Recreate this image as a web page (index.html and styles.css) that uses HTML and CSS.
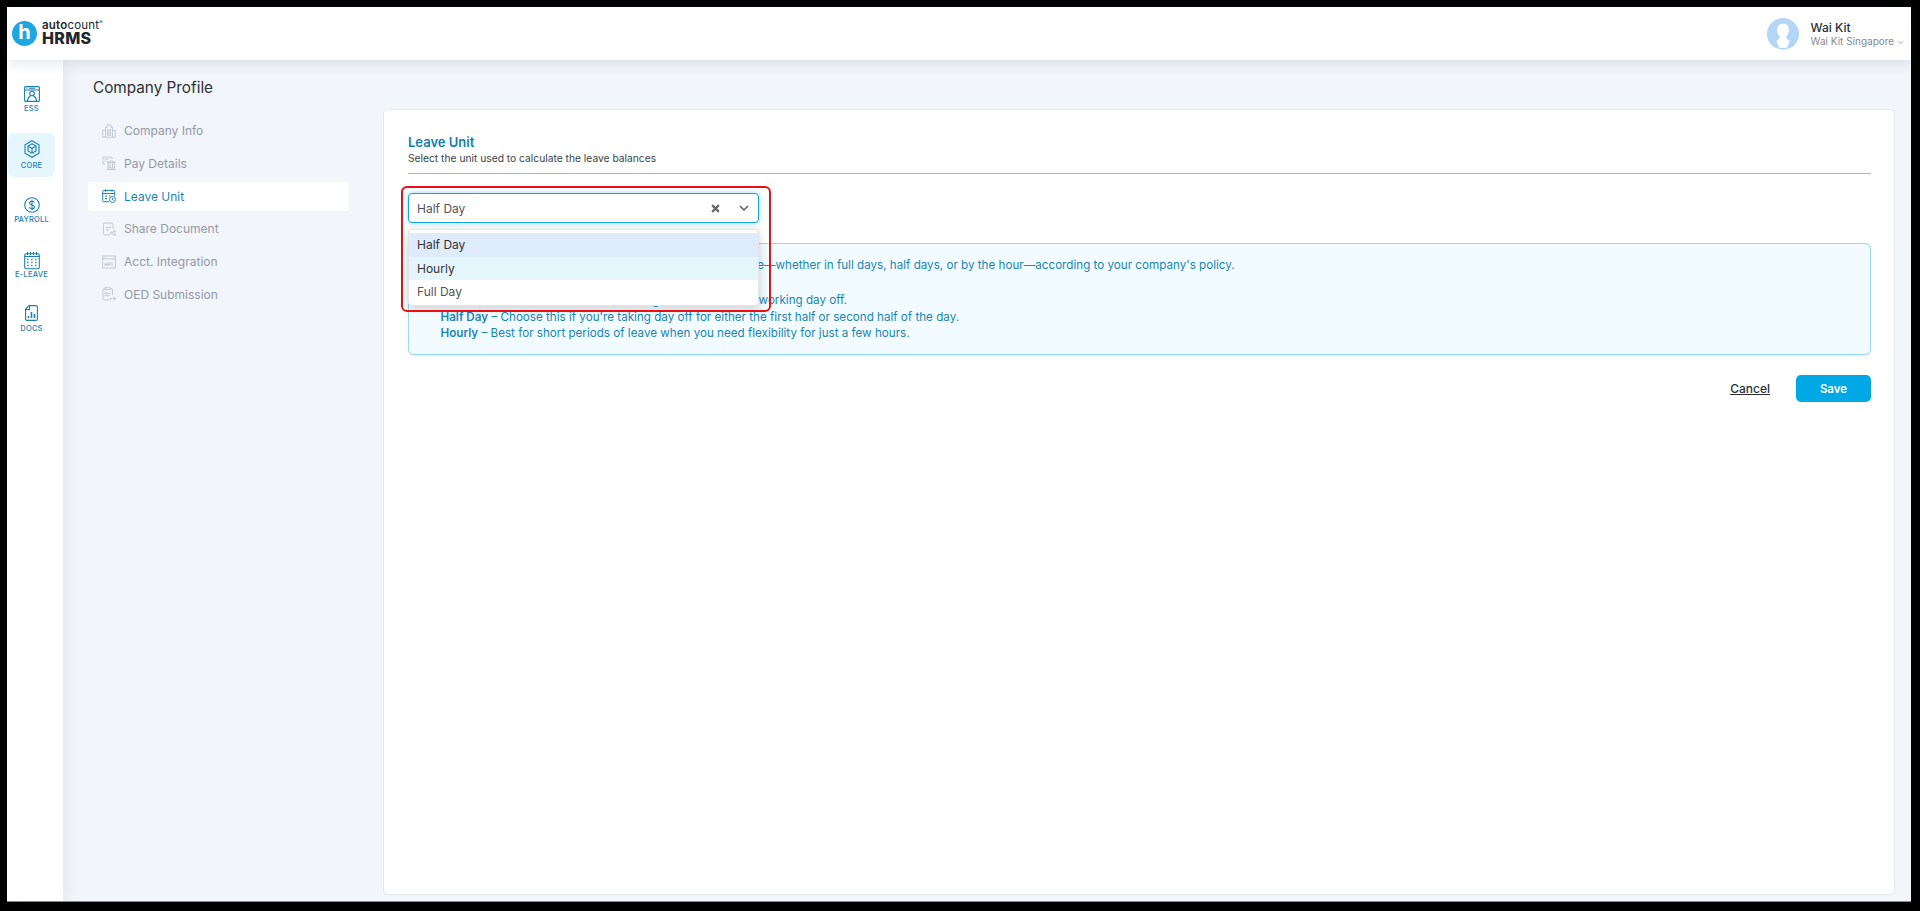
FILE: index.html
```html
<!DOCTYPE html>
<html lang="en">
<head>
  <meta charset="UTF-8" />
  <meta name="viewport" content="width=device-width, initial-scale=1" />
  <title>Company Profile</title>
  <link rel="stylesheet" href="styles.css">
</head>
<body>

<div class="app">

  <!-- top bar -->
  <header class="topbar">
    <div class="logo">
      <span class="logo-mark">h</span>
      <div class="logo-text">
        <div class="logo-top"><b>auto</b>count<sup>®</sup></div>
        <div class="logo-name">HRMS</div>
      </div>
    </div>
    <div class="user">
      <svg class="avatar" viewBox="0 0 32 32">
        <defs><clipPath id="avatarClip"><path d="M0 0h32v27.5L26 29.500 16 32 6 29.500 0 27.500z"/></clipPath></defs>
        <circle cx="16" cy="16" r="16" fill="#b3d5f6" clip-path="url(#avatarClip)"/>
        <path d="M16 5.500c-3.800 0-6 2.800-6 6.300 0 3 1.400 5.500 2.700 7 .5 1.800-1.500 3-3.400 4.300L12 29.500c2.600.7 5.400.7 8 0l2.700-6.400c-1.900-1.300-3.900-2.500-3.400-4.300 1.300-1.500 2.700-4 2.700-7 0-3.500-2.200-6.300-6-6.300z" fill="#fff"/>
      </svg>
      <div class="user-text">
        <div class="user-name">Wai Kit</div>
        <div class="user-org">Wai Kit Singapore
          <svg class="user-caret" viewBox="0 0 8 5"><path d="M1 1l3 3 3-3" fill="none" stroke="#888" stroke-width="0.800"/></svg>
        </div>
      </div>
    </div>
  </header>

  <div class="body">

    <!-- module rail -->
    <aside class="rail">
      <div class="rail-item rail-ess">
        <svg class="rail-icon" viewBox="0 0 16 16"><rect x="0.600" y="0.600" width="14.800" height="14.800" rx="1"/><path d="M0.600 4h14.800M2.500 2.300h1M5 2.300h6"/><circle cx="8" cy="7.500" r="2.300"/><path d="M3.500 15c0-3 2-4.400 2.900-4.800M12.500 15c0-3-2-4.400-2.900-4.800"/></svg>
        <span>ESS</span>
      </div>
      <div class="rail-item rail-core active">
        <svg class="rail-icon" viewBox="0 0 16 18"><path d="M8 .7l7 4v8.600l-7 4-7-4V4.700z"/><path d="M8 3.800l4 2.300v4.800l-4 2.300-4-2.300V6.100z"/><path d="M4 6.100l4 2.400 4-2.400M8 8.500v4.700"/></svg>
        <span>CORE</span>
      </div>
      <div class="rail-item rail-payroll">
        <svg class="rail-icon" viewBox="0 0 16 16"><circle cx="8" cy="8" r="7.300"/><path d="M10.500 5.700C10.200 4.700 9.200 4.200 8 4.200c-1.500 0-2.500.8-2.500 1.900 0 2.700 5 1.200 5 3.800 0 1.100-1 1.900-2.500 1.900-1.300 0-2.300-.6-2.600-1.600M8 2.800v10.400"/></svg>
        <span>PAYROLL</span>
      </div>
      <div class="rail-item rail-leave">
        <svg class="rail-icon" viewBox="0 0 16 18"><rect x="0.700" y="2.200" width="14.600" height="15" rx="1.500"/><path d="M3.500 0.500v3M6.500 0.500v3M9.500 0.500v3M12.500 0.500v3M0.700 5h14.600"/><path class="dots" d="M3.200 8h1.600M7.200 8h1.600M11.200 8h1.600M3.200 11h1.600M7.200 11h1.600M11.200 11h1.600M3.200 14h1.600M7.200 14h1.600M11.200 14h1.600"/></svg>
        <span>E-LEAVE</span>
      </div>
      <div class="rail-item rail-docs">
        <svg class="rail-icon doc-icon" viewBox="0 0 13 16"><path d="M4 .6h7a1.400 1.400 0 0 1 1.400 1.400v12a1.400 1.400 0 0 1-1.400 1.400H2A1.400 1.400 0 0 1 .6 14V4z"/><path d="M.6 4.500H4.500V.6"/><path class="bars" d="M3.500 13v-2M6.500 13V7M9.500 13v-4"/></svg>
        <span>DOCS</span>
      </div>
    </aside>

    <main class="main">

      <!-- sections -->
      <section class="side">
        <h1 class="page-title">Company Profile</h1>
        <nav class="side-nav">
          <a class="side-link">
            <svg viewBox="0 0 14 14"><path d="M3.500 13V3.500h1.500V1h4v2.500h1.500V13M.7 13V6.500h2.800M13.300 13V6.500h-2.800M.3 13.200h13.400M5.500 5v7M7 5v7M8.500 5v7"/></svg>
            Company Info
          </a>
          <a class="side-link">
            <svg viewBox="0 0 14 14"><path d="M3 8H1V1h9v2M2.500 3h4M2.500 5h2M5 6.500L9.300 4.500l4.200 2H5zM6 6.800v5M8 6.800v5M10.500 6.800v5M12.500 6.800v5M5 12h8.500M4.500 13.500h9.500"/></svg>
            Pay Details
          </a>
          <a class="side-link active">
            <svg viewBox="0 0 14 14"><path d="M7 12.700H1.700a1 1 0 0 1-1-1V2.500a1 1 0 0 1 1-1h10a1 1 0 0 1 1 1V7M3.500.3v2.500M10 .3v2.500M.7 4.500h12M3 7h2M3 9.500h2M7 7h1.500"/><circle cx="10.500" cy="10.500" r="3"/><path d="M10.500 9v1.700l1.100.7"/></svg>
            Leave Unit
          </a>
          <a class="side-link">
            <svg viewBox="0 0 14 14"><path d="M8 13H3a1.500 1.500 0 0 1-1.500-1.500V2.500A1.500 1.500 0 0 1 3 1h6a2 2 0 0 1 2 2v4M4 5.500h5M4 8h3"/><circle cx="9" cy="11" r=".9"/><circle cx="12.500" cy="9.300" r=".9"/><circle cx="12.500" cy="12.700" r=".9"/><path d="M9.800 10.600l1.900-1M9.800 11.400l1.900 1"/></svg>
            Share Document
          </a>
          <a class="side-link">
            <svg viewBox="0 0 14 14"><rect x=".7" y="1" width="12.600" height="12"/><path d="M.7 3.800h12.600M2.500 2.400h1"/><path class="thin" d="M3 11V8.500l1-1 1 1V11M3 9.700h2M6.300 11V7.500h1.300a1 1 0 0 1 0 2.200H6.300M10 7.500V11"/></svg>
            Acct. Integration
          </a>
          <a class="side-link">
            <svg viewBox="0 0 14 14"><path d="M9 13H2.500a1.500 1.500 0 0 1-1.500-1.500V3a1.500 1.500 0 0 1 1.500-1.500H3M8.500 1.500h.500A1.500 1.500 0 0 1 10.500 3v5M3 .7h5.500v2H3zM5.500 6.500h3M5.500 8.500h2"/><circle cx="3.700" cy="6.300" r="1"/><path d="M2.300 9.500c0-1 .7-1.500 1.400-1.500s1.400.5 1.400 1.500M8 11.500h5.500M11.500 9.500l2 2-2 2"/></svg>
            OED Submission
          </a>
        </nav>
      </section>

      <!-- leave unit form -->
      <section class="card">
        <h2 class="card-title">Leave Unit</h2>
        <p class="card-sub">Select the unit used to calculate the leave balances</p>
        <div class="divider"></div>

        <div class="select-wrap">
          <div class="select">
            <span class="select-value">Half Day</span>
            <svg class="select-clear" viewBox="0 0 8 8"><path d="M1 1l6 6M7 1L1 7"/></svg>
            <svg class="select-caret" viewBox="0 0 10 6"><path d="M1 1l4 4 4-4"/></svg>
          </div>
          <div class="select-menu">
            <div class="option selected">Half Day</div>
            <div class="option hover">Hourly</div>
            <div class="option">Full Day</div>
          </div>
          <div class="callout"></div>
        </div>

        <div class="info">
          <p class="info-lead">Leave Unit lets you decide how staff apply for their leave time—whether in full days, half days, or by the hour—according to your company's policy.</p>
          <p class="info-head">Leave unit options:</p>
          <p class="info-row"><b>Full Day</b> – Select this if you are planning to take the entire working day off.</p>
          <p class="info-row"><b>Half Day</b> – Choose this if you're taking day off for either the first half or second half of the day.</p>
          <p class="info-row"><b>Hourly</b> – Best for short periods of leave when you need flexibility for just a few hours.</p>
        </div>

        <div class="actions">
          <a class="btn-cancel">Cancel</a>
          <button class="btn-save" type="button">Save</button>
        </div>
      </section>

    </main>
  </div>
</div>

</body>
</html>
```

FILE: styles.css
```css
* {
  box-sizing: border-box;
}
html, body {
  height: 100%;
}
body {
  margin: 0;
  padding: 7px 9px 9px 7px;
  background: #000;
  font-family: "Inter", "Liberation Sans", sans-serif;
  overflow: hidden;
}
.app {
  height: 100%;
  display: flex;
  flex-direction: column;
  background: #f2f5f9;
  border-bottom: 1px solid #8a8a8a;
}

/* top bar */
.topbar {
  height: 53px;
  flex: none;
  background: white;
  display: flex;
  align-items: center;
  justify-content: space-between;
  padding: 0 7px 0 5px;
  box-shadow: 0 3px 12px rgba(60, 80, 110, 0.14);
  position: relative;
  z-index: 2;
}
.logo {
  display: flex;
  align-items: center;
  gap: 5px;
}
.logo-mark {
  width: 25px;
  height: 25px;
  border-radius: 50%;
  background: #1ea6e3;
  color: white;
  font-size: 20px;
  font-weight: 700;
  line-height: 23px;
  text-align: center;
}
.logo-text {
  color: #23262b;
  margin-top: -2px;
}
.logo-top {
  font-size: 11.500px;
  line-height: 11px;
  letter-spacing: 0.2px;
}
.logo-top b {
  font-weight: 600;
}
.logo-top sup {
  font-size: 5px;
  line-height: 0;
}
.logo-name {
  font-size: 16px;
  line-height: 15px;
  font-weight: 800;
  letter-spacing: 0.3px;
}
.user {
  display: flex;
  align-items: center;
  gap: 12px;
}
.avatar {
  width: 32px;
  height: 32px;
}
.user-name {
  font-size: 12px;
  font-weight: 500;
  line-height: 15px;
  color: #2b2f36;
}
.user-org {
  font-size: 10px;
  line-height: 13px;
  color: #85898f;
}
.user-caret {
  width: 7px;
  height: 5px;
}

/* module rail */
.body {
  flex: 1;
  display: flex;
  min-height: 0;
}
.rail {
  width: 56px;
  flex: none;
  background: white;
  padding: 26px 8px 0 1px;
  display: flex;
  flex-direction: column;
  box-shadow: 4px 0 14px rgba(60, 80, 110, 0.08);
  position: relative;
  z-index: 1;
}
.rail-item {
  flex: none;
  border-radius: 6px;
  display: flex;
  flex-direction: column;
  align-items: center;
  color: #1a80b4;
  font-size: 7.500px;
  font-weight: 500;
  letter-spacing: 0.2px;
  line-height: 10px;
}
.rail-item.active {
  background: #e6f6fd;
}
.rail-icon {
  width: 16px;
  height: 16px;
  flex: none;
  fill: none;
  stroke: #1a80b4;
  stroke-width: 1.100;
  margin-bottom: 2px;
}
.rail-ess {
  height: 47px;
}
.rail-core {
  height: 44px;
  margin-bottom: 20px;
  padding-top: 7px;
}
.rail-core .rail-icon {
  height: 18px;
  margin-bottom: 3px;
}
.rail-payroll {
  height: 54px;
}
.rail-leave {
  height: 54px;
}
.rail-leave .rail-icon {
  height: 19px;
  margin-bottom: 0;
}
.rail-leave .dots {
  stroke-dasharray: 1.300 2.700;
  stroke-width: 1.300;
}
.rail-docs .doc-icon {
  width: 13px;
  margin-bottom: 3px;
}
.doc-icon .bars {
  stroke-width: 1.600;
}

/* main area */
.main {
  flex: 1;
  min-width: 0;
  display: flex;
  gap: 34px;
  padding: 49px 16px 6px 25px;
}
.side {
  width: 261px;
  flex: none;
  margin-top: -31px;
}
.page-title {
  margin: 0 0 18px 5px;
  font-size: 15.300px;
  line-height: 20px;
  font-weight: 400;
  color: #2c3038;
}
.side-nav {
  display: flex;
  flex-direction: column;
  gap: 3.800px;
}
.side-link {
  height: 29px;
  display: flex;
  align-items: center;
  gap: 8px;
  padding-left: 14px;
  border-radius: 3px;
  font-size: 12px;
  color: #939aa6;
}
.side-link svg {
  width: 14px;
  height: 14px;
  fill: none;
  stroke: #b9c1cc;
  stroke-width: 0.800;
}
.side-link.active {
  background: white;
  color: #1a86b8;
}
.side-link.active svg {
  stroke: #1a86b8;
  stroke-width: 1;
}

/* card */
.card {
  flex: 1;
  min-width: 0;
  background: white;
  border: 1px solid #e4e8ee;
  border-radius: 5px;
  padding: 23px 23px 0 24px;
}
.card-title {
  margin: 0;
  font-size: 13px;
  line-height: 18px;
  font-weight: 600;
  color: #0f7fad;
}
.card-sub {
  margin: 0;
  font-size: 10.250px;
  line-height: 14px;
  color: #3a3f47;
}
.divider {
  margin-top: 8px;
  border-top: 1px solid #aab6c6;
}

/* select */
.select-wrap {
  position: relative;
  width: 351px;
  margin-top: 19px;
}
.select {
  height: 30px;
  display: flex;
  align-items: center;
  padding: 0 9px 0 8px;
  background: white;
  border: 1px solid #14a5dd;
  border-radius: 4px;
  box-shadow: 0 0 5px rgba(20, 165, 221, 0.45);
  font-size: 12px;
  color: #555;
}
.select-value {
  flex: 1;
}
.select-clear {
  width: 9px;
  height: 9px;
  fill: none;
  stroke: #666;
  stroke-width: 1.900;
  margin-right: 19px;
}
.select-caret {
  width: 10px;
  height: 6px;
  fill: none;
  stroke: #555;
  stroke-width: 1.400;
}
.select-menu {
  position: absolute;
  top: 36px;
  left: 0;
  width: 100%;
  height: 77px;
  padding-top: 3px;
  background: white;
  border: 1px solid #e2e6ea;
  border-radius: 4px;
  box-shadow: 0 2px 10px rgba(0, 0, 0, 0.18);
  z-index: 3;
}
.option {
  height: 23.500px;
  line-height: 23px;
  padding-left: 8px;
  font-size: 12px;
  color: #555;
}
.option.selected {
  background: #deebfb;
  color: #333;
}
.option.hover {
  background: #e5f5fc;
  color: #333;
}
.callout {
  position: absolute;
  top: -7px;
  left: -7px;
  width: 370px;
  height: 126px;
  border: 2px solid #ee0d12;
  border-radius: 6px;
  z-index: 4;
}

/* info box */
.info {
  height: 112px;
  margin-top: 20px;
  padding: 13px 16px 0;
  background: #f2fbff;
  border: 1px solid #9bd8f4;
  border-radius: 6px;
  box-shadow: 0 1px 2px rgba(20, 140, 200, 0.18);
  font-size: 11.650px;
  line-height: 16.500px;
  color: #1a86b8;
}
.info p {
  margin: 0;
}
.info-lead {
  margin-bottom: 2px !important;
}
.info-row {
  padding-left: 15.500px;
}
.info-row b {
  font-weight: 600;
}

/* buttons */
.actions {
  margin-top: 20px;
  display: flex;
  justify-content: flex-end;
  align-items: center;
  gap: 26px;
}
.btn-cancel {
  font-size: 12px;
  font-weight: 500;
  color: #2b2f36;
  text-decoration: underline;
}
.btn-save {
  width: 75px;
  height: 27px;
  border: none;
  border-radius: 5px;
  background: #00a8e6;
  color: white;
  font-family: inherit;
  font-size: 11.500px;
  font-weight: 600;
}
```
